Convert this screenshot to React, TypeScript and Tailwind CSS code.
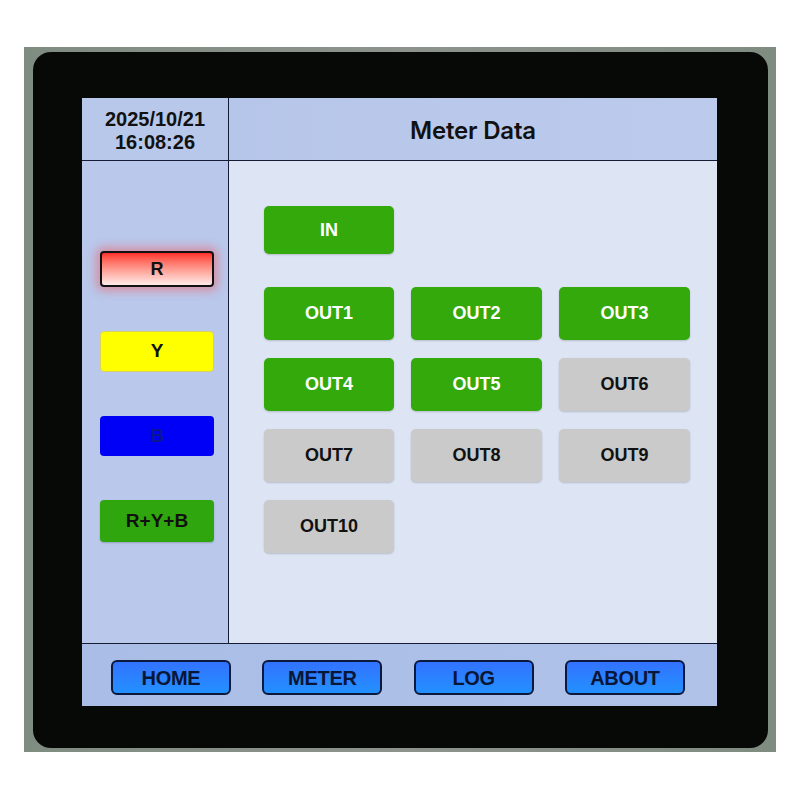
const sans = "font-['Liberation_Sans',Arial,sans-serif]";

type Out = { label: string; on: boolean };

const outputs: Out[] = [
  { label: "OUT1", on: true },
  { label: "OUT2", on: true },
  { label: "OUT3", on: true },
  { label: "OUT4", on: true },
  { label: "OUT5", on: true },
  { label: "OUT6", on: false },
  { label: "OUT7", on: false },
  { label: "OUT8", on: false },
  { label: "OUT9", on: false },
  { label: "OUT10", on: false },
];

const StatusTile = ({ label, on }: Out) => (
  <div
    className={`flex h-[53px] items-center justify-center rounded-[5px] text-[18px] font-bold shadow-[0_1px_2px_rgba(0,0,0,0.18)] ${sans} ${
      on ? "bg-[#33a90b] text-white" : "bg-[#cacaca] text-[#111]"
    }`}
  >
    {label}
  </div>
);

const NavButton = ({ label }: { label: string }) => (
  <button
    className={`flex h-[35px] w-[120px] items-center justify-center rounded-[6px] border-2 border-[#0b1a3c] bg-gradient-to-b from-[#3272ff] to-[#2290ff] text-[20px] font-bold tracking-[-0.3px] text-[#0a1636] ${sans}`}
  >
    {label}
  </button>
);

export default function App() {
  return (
    <div className="h-[800px] w-[800px] bg-white pl-[24px] pt-[47px]">
      <div className="h-[705px] w-[752px] bg-gradient-to-r from-[#7f8c80] via-[#8d928d] to-[#7f8c80] pl-[9px] pr-[8px] pt-[5px] pb-[4px]">
        <div className="flex h-full w-full flex-col rounded-[18px] bg-[#070907] pl-[49px] pr-[51px] pt-[46px]">
          <div className="flex h-[608px] w-[635px] flex-col">
            {/* header */}
            <div className="flex h-[63px] border-b border-[#141c36] bg-[#b8c8ea]">
              <div
                className={`flex w-[147px] flex-col items-center justify-center border-r border-[#141c36] pt-[4px] text-[20px] font-bold leading-[23px] text-[#111] ${sans}`}
              >
                <span>2025/10/21</span>
                <span>16:08:26</span>
              </div>
              <div className="flex flex-1 items-center justify-center bg-gradient-to-r from-[#b6c6ea] to-[#bccbec] pt-[3px] font-['Inter',sans-serif] text-[24px] font-semibold tracking-[-0.2px] text-[#111]">
                Meter Data
              </div>
            </div>

            {/* body */}
            <div className="flex h-[482px]">
              <div className="flex w-[147px] flex-col gap-[44px] border-r border-[#141c36] bg-[#b9c8eb] pl-[18px] pt-[90px]">
                <div
                  className={`flex h-[36px] w-[114px] items-center justify-center rounded-[4px] border-2 border-[#111] bg-gradient-to-b from-[#ff2a2a] to-[#ffeaea] text-[18px] font-bold text-[#111] shadow-[0_0_10px_4px_rgba(255,60,60,0.4)] ${sans}`}
                >
                  R
                </div>
                <div
                  className={`flex h-[41px] w-[114px] items-center justify-center rounded-[4px] border border-[#d8d060] bg-[#ffff00] text-[19px] font-bold text-[#111] ${sans}`}
                >
                  Y
                </div>
                <div
                  className={`flex h-[40px] w-[114px] items-center justify-center rounded-[4px] bg-[#0000f6] text-[19px] font-bold text-[#0a1690] ${sans}`}
                >
                  B
                </div>
                <div
                  className={`flex h-[42px] w-[114px] items-center justify-center rounded-[4px] bg-[#2fa60d] text-[19px] font-bold text-[#111] shadow-[0_1px_2px_rgba(0,0,0,0.2)] ${sans}`}
                >
                  R+Y+B
                </div>
              </div>

              <div className="flex flex-1 flex-col bg-[#dde4f4] pl-[35px] pt-[45px]">
                <div
                  className={`flex h-[48px] w-[130px] items-center justify-center rounded-[5px] bg-[#33a90b] text-[18px] font-bold text-white shadow-[0_1px_2px_rgba(0,0,0,0.18)] ${sans}`}
                >
                  IN
                </div>
                <div className="mt-[33px] grid grid-cols-[130px_131px_131px] gap-x-[17px] gap-y-[18px]">
                  {outputs.map((o) => (
                    <StatusTile key={o.label} {...o} />
                  ))}
                </div>
              </div>
            </div>

            {/* footer */}
            <div className="flex h-[63px] items-start justify-between border-t border-[#141c36] bg-gradient-to-r from-[#a9bde6] to-[#b0c2e8] pl-[29px] pr-[32px] pt-[16px]">
              <NavButton label="HOME" />
              <NavButton label="METER" />
              <NavButton label="LOG" />
              <NavButton label="ABOUT" />
            </div>
          </div>
        </div>
      </div>
    </div>
  );
}
